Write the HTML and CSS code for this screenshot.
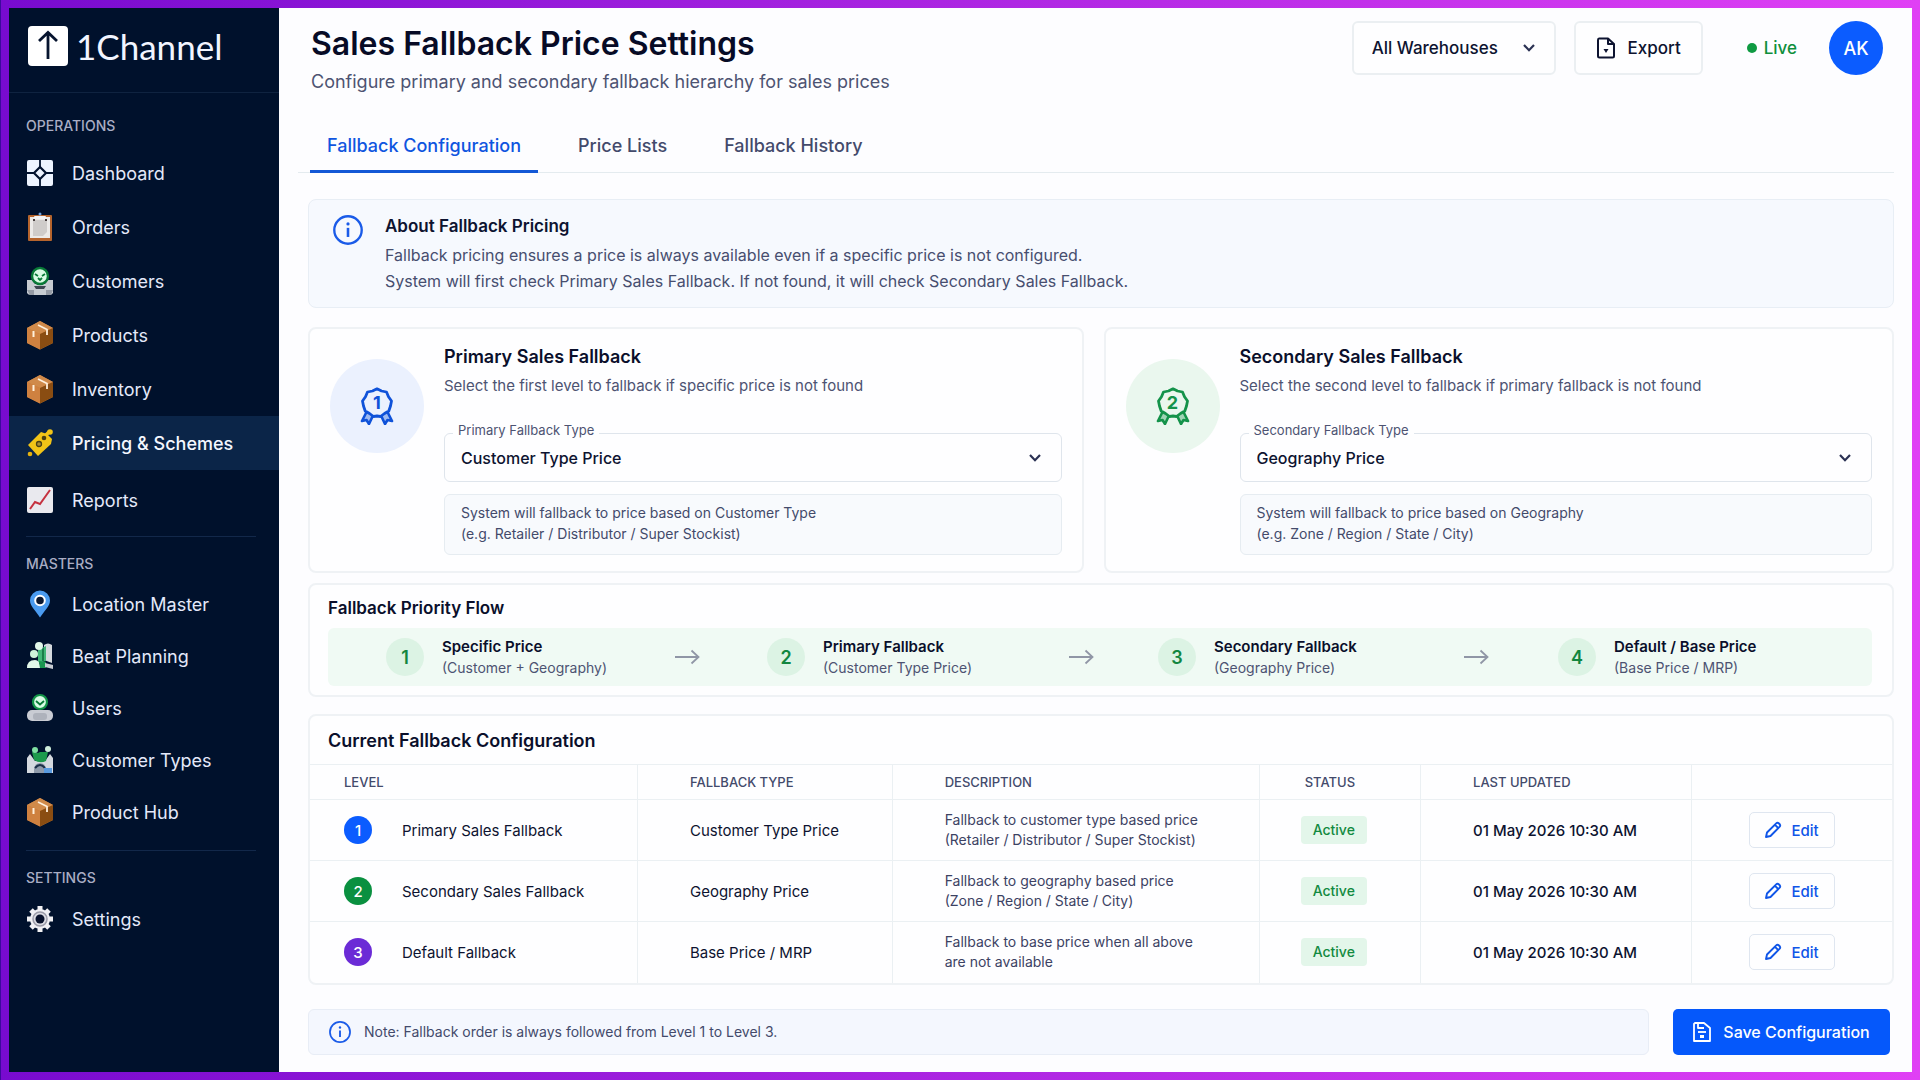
FILE: index.html
```
<!DOCTYPE html>
<html lang="en">
<head>
    <meta charset="UTF-8">
    <meta name="viewport" content="width=device-width, initial-scale=1.0">
    <title>Sales Fallback Price Settings | 1Channel</title>
    <link rel="stylesheet" href="styles.css">
</head>
<body>

    <!-- Shared icons -->
    <svg class="sprite" aria-hidden="true">
        <symbol id="icon-box" viewBox="0 0 26 30">
            <path d="M13 1 L26 8 V23 L13 29.500 L0 23 V8 Z" fill="#c47a3a"/>
            <path d="M13 1 L26 8 L13 14 L0 8 Z" fill="#d08a4a"/>
            <path d="M13 14 L26 8 V23 L13 29.500 Z" fill="#8a4d12"/>
            <path d="M0 8 L13 14 V29.500 L0 23 Z" fill="#cf8140"/>
            <path d="M11 5 L20 9.500 V15" fill="none" stroke="#fff0dc" stroke-width="1.800"/>
            <path d="M6.500 11 V17" fill="none" stroke="#fff0dc" stroke-width="2"/>
        </symbol>
        <symbol id="icon-info" viewBox="0 0 28 28">
            <circle cx="14" cy="14" r="12.800" fill="none" stroke="currentColor" stroke-width="2.200"/>
            <circle cx="14" cy="8.300" r="1.500" fill="currentColor"/>
            <path d="M14 12 V20.500" stroke="currentColor" stroke-width="2.400"/>
        </symbol>
        <symbol id="icon-chevron" viewBox="0 0 14 10">
            <path d="M2 2 L7 7.200 L12 2" fill="none" stroke="currentColor" stroke-width="2.200"/>
        </symbol>
        <symbol id="icon-arrow" viewBox="0 0 26 16">
            <path d="M1 8 H24 M17.500 1.500 L24.500 8 L17.500 14.500" fill="none" stroke="currentColor" stroke-width="1.800"/>
        </symbol>
        <symbol id="icon-medal" viewBox="0 0 34 38">
            <path d="M6.500 25 L2 34 L6.500 33 L9 37 L13 28.500 M27.500 25 L32 34 L27.500 33 L25 37 L21 28.500" fill="currentColor" fill-opacity="0.350" stroke="currentColor" stroke-width="2.600" stroke-linejoin="round"/>
            <path d="M17 1.800 L21.500 4 L26.500 5 L28.500 9.800 L31.500 14 L30.500 19 L28.800 24 L24.500 26.500 L20.500 29.500 L17 29 L13.500 29.500 L9.500 26.500 L5.200 24 L3.500 19 L2.500 14 L5.500 9.800 L7.500 5 L12.500 4 Z" fill="none" stroke="currentColor" stroke-width="2.800" stroke-linejoin="round"/>
        </symbol>
        <symbol id="icon-pencil" viewBox="0 0 18 18">
            <path d="M2 16 L3 11.500 L12.200 2.300 Q13.500 1 15 2.500 Q17 4.300 15.700 5.700 L6.500 15 Z M11 3.800 L14.200 7" fill="none" stroke="currentColor" stroke-width="1.900" stroke-linejoin="round"/>
        </symbol>
    </svg>

    <aside class="sidebar">
        <a href="#" class="logo">
            <svg width="40" height="40" viewBox="0 0 40 40" aria-hidden="true">
                <rect width="40" height="40" rx="4" fill="#ffffff"/>
                <path d="M20 33 V7 M11 15 L20 6.500 L29 15" fill="none" stroke="#06142f" stroke-width="2.800"/>
            </svg>
            <span>1Channel</span>
        </a>

        <nav class="side-nav">
            <h2>OPERATIONS</h2>
            <a href="#">
                <svg viewBox="0 0 26 30" aria-hidden="true">
                    <rect x="0" y="2" width="26" height="26" rx="2" fill="#eef4ff"/>
                    <path d="M13 2 V28 M0 15 H26" stroke="#03132f" stroke-width="1.800"/>
                    <path d="M13 9 L19 15 L13 21 L7 15 Z" fill="#eef4ff" stroke="#03132f" stroke-width="2.200"/>
                </svg>
                Dashboard
            </a>
            <a href="#">
                <svg viewBox="0 0 26 30" aria-hidden="true">
                    <rect x="1" y="3" width="24" height="26" rx="1" fill="#b5642d"/>
                    <rect x="3" y="5" width="20" height="21" fill="#eceae8"/>
                    <path d="M6 8 H20 V20 L16 24 H6 Z" fill="#cfccca"/>
                    <rect x="7" y="4" width="12" height="3" rx="1" fill="#f4f4f6"/>
                    <circle cx="13" cy="2" r="1.500" fill="#6fa0dc"/>
                    <path d="M6 8 H8 M18 8 H20" stroke="#443c3c" stroke-width="2"/>
                </svg>
                Orders
            </a>
            <a href="#">
                <svg viewBox="0 0 26 30" aria-hidden="true">
                    <path d="M0 14 L5 14 L8 18 H18 L21 14 H26 V27 Q25 29 22 29 H4 Q1 29 0 27 Z" fill="#c7ccd2"/>
                    <path d="M7 20 H19 L17 23 H9 Z" fill="#3d4652"/>
                    <path d="M0 24 H7 V29 H3 Z M19 24 H26 L24 29 H19 Z" fill="#959ba5"/>
                    <circle cx="13" cy="10" r="8" fill="#d9fbe4" stroke="#087a37" stroke-width="2.400"/>
                    <path d="M8 8 L11 10 M18 8 L15 10 M11 12 L13 14 L15 12" fill="none" stroke="#087a37" stroke-width="1.800"/>
                </svg>
                Customers
            </a>
            <a href="#"><svg aria-hidden="true"><use href="#icon-box"/></svg>Products</a>
            <a href="#"><svg aria-hidden="true"><use href="#icon-box"/></svg>Inventory</a>
            <a href="#" class="active" aria-current="page">
                <svg viewBox="0 0 26 30" aria-hidden="true">
                    <path d="M1 17 L14 4 L20 6 L25 11 L24 16 L11 28 Z" fill="#f2c417"/>
                    <path d="M18 8 L23 3" stroke="#f2c417" stroke-width="3.500"/>
                    <circle cx="23" cy="4" r="2.800" fill="#f2c417"/>
                    <circle cx="3" cy="26" r="2.300" fill="#e6b20e"/>
                    <circle cx="17" cy="10" r="2.300" fill="#4b4113"/>
                    <circle cx="12" cy="16" r="2.500" fill="#a98d35" stroke="#4b4113" stroke-width="1.300"/>
                </svg>
                Pricing &amp; Schemes
            </a>
            <a href="#">
                <svg viewBox="0 0 26 30" aria-hidden="true">
                    <rect x="0" y="2" width="26" height="26" rx="2" fill="#e9e9ee"/>
                    <path d="M3 24 L8 17 L13 19 L23 5" fill="none" stroke="#c5313f" stroke-width="2"/>
                </svg>
                Reports
            </a>
        </nav>

        <nav class="side-nav masters">
            <h2>MASTERS</h2>
            <a href="#">
                <svg viewBox="0 0 26 30" aria-hidden="true">
                    <path d="M13 28.500 C9 22 3 17.500 3 11.500 A10 10 0 0 1 23 11.500 C23 17.500 17 22 13 28.500 Z" fill="#4a9bf0"/>
                    <circle cx="13" cy="11.500" r="4.800" fill="#0b1830" stroke="#ffffff" stroke-width="2"/>
                </svg>
                Location Master
            </a>
            <a href="#">
                <svg viewBox="0 0 26 30" aria-hidden="true">
                    <path d="M17 4 Q21 1 25 4 V22 L17 19 Z" fill="#d5dade"/>
                    <path d="M11 9 L19 5 V20 L11 22 Z" fill="#42b678"/>
                    <path d="M16 7 V20" stroke="#0e6b3a" stroke-width="1.500"/>
                    <circle cx="12" cy="5" r="4" fill="#e2f8e9"/>
                    <circle cx="7" cy="13" r="4" fill="#cdf3da"/>
                    <path d="M0 27 Q0 19 8 19 Q13 19 13 27 Z" fill="#e2f8e9"/>
                    <path d="M12 20 L19 21 V27 H13 Z" fill="#1a9650"/>
                    <path d="M18 22 L26 24 V28 L18 26 Z" fill="#c7ccd2"/>
                </svg>
                Beat Planning
            </a>
            <a href="#">
                <svg viewBox="0 0 26 30" aria-hidden="true">
                    <rect x="0" y="17" width="26" height="11" rx="5" fill="#c9ccd3"/>
                    <rect x="6" y="20" width="14" height="7" rx="3" fill="#aeb2bb"/>
                    <circle cx="13" cy="9" r="7" fill="#d9fbe4" stroke="#129447" stroke-width="2.200"/>
                    <path d="M9 8 L13 11.500 L17 8" fill="none" stroke="#087a37" stroke-width="1.800"/>
                </svg>
                Users
            </a>
            <a href="#">
                <svg viewBox="0 0 26 30" aria-hidden="true">
                    <path d="M0 13 L3 9 L8 16 H18 L23 9 L26 13 V28 H0 Z" fill="#d4d9df"/>
                    <path d="M5 7 L11 8 L13 7 L21 7 L19 16 Q13 19 7 15 Z" fill="#1c9a4c"/>
                    <circle cx="8" cy="5" r="3" fill="#7fe0a2"/>
                    <circle cx="21" cy="4" r="3" fill="#cfeedb"/>
                    <path d="M7 24 Q8 18 13 18 Q18 18 19 24 V28 H7 Z" fill="#8f9bab"/>
                    <path d="M8 23 Q13 17 18 23" fill="none" stroke="#1b2f48" stroke-width="2"/>
                    <rect x="17" y="23" width="8" height="5" fill="#5a9be0"/>
                </svg>
                Customer Types
            </a>
            <a href="#"><svg aria-hidden="true"><use href="#icon-box"/></svg>Product Hub</a>
        </nav>

        <nav class="side-nav settings">
            <h2>SETTINGS</h2>
            <a href="#">
                <svg viewBox="0 0 26 30" aria-hidden="true">
                    <g stroke="#f1f1f4" stroke-width="5">
                        <path d="M13 2 V28 M0 15 H26 M4 6 L22 24 M22 6 L4 24"/>
                    </g>
                    <circle cx="13" cy="15" r="10" fill="#f1f1f4"/>
                    <circle cx="13" cy="15" r="7" fill="#dcdce2" stroke="#9c9ca8" stroke-width="1.500"/>
                    <circle cx="13" cy="15" r="4.500" fill="#07112a"/>
                </svg>
                Settings
            </a>
        </nav>
    </aside>

    <main class="main">
        <header class="page-header">
            <div>
                <h1>Sales Fallback Price Settings</h1>
                <p>Configure primary and secondary fallback hierarchy for sales prices</p>
            </div>
            <div class="header-actions">
                <div class="select-wrap warehouse">
                    <select aria-label="Warehouse">
                        <option>All Warehouses</option>
                    </select>
                    <svg aria-hidden="true"><use href="#icon-chevron"/></svg>
                </div>
                <button type="button" class="export">
                    <svg width="20" height="22" viewBox="0 0 20 22" aria-hidden="true">
                        <path d="M3 1.500 H12 L18 7 V19 Q18 20.500 16.500 20.500 H3.500 Q2 20.500 2 19 V3 Q2 1.500 3 1.500 Z M12 1.500 V7 H18" fill="none" stroke="currentColor" stroke-width="2" stroke-linejoin="round"/>
                        <path d="M7.500 12 H12.500 L10 16 Z" fill="currentColor"/>
                    </svg>
                    Export
                </button>
                <span class="live">Live</span>
                <button type="button" class="avatar">AK</button>
            </div>
        </header>

        <nav class="tabs">
            <a href="#" class="active" aria-current="page">Fallback Configuration</a>
            <a href="#">Price Lists</a>
            <a href="#">Fallback History</a>
        </nav>

        <section class="about">
            <svg aria-hidden="true"><use href="#icon-info"/></svg>
            <div>
                <h2>About Fallback Pricing</h2>
                <p>Fallback pricing ensures a price is always available even if a specific price is not configured.<br>
                System will first check Primary Sales Fallback. If not found, it will check Secondary Sales Fallback.</p>
            </div>
        </section>

        <div class="fallback-cards">
            <section class="card fallback-card">
                <div class="medal medal-blue">
                    <svg aria-hidden="true"><use href="#icon-medal"/></svg>
                    <span>1</span>
                </div>
                <div class="fallback-body">
                    <h2>Primary Sales Fallback</h2>
                    <p>Select the first level to fallback if specific price is not found</p>
                    <div class="field">
                        <label for="primaryType">Primary Fallback Type</label>
                        <div class="select-wrap">
                            <select id="primaryType">
                                <option>Customer Type Price</option>
                            </select>
                            <svg aria-hidden="true"><use href="#icon-chevron"/></svg>
                        </div>
                    </div>
                    <div class="hint">System will fallback to price based on Customer Type<br>(e.g. Retailer / Distributor / Super Stockist)</div>
                </div>
            </section>

            <section class="card fallback-card">
                <div class="medal medal-green">
                    <svg aria-hidden="true"><use href="#icon-medal"/></svg>
                    <span>2</span>
                </div>
                <div class="fallback-body">
                    <h2>Secondary Sales Fallback</h2>
                    <p>Select the second level to fallback if primary fallback is not found</p>
                    <div class="field">
                        <label for="secondaryType">Secondary Fallback Type</label>
                        <div class="select-wrap">
                            <select id="secondaryType">
                                <option>Geography Price</option>
                            </select>
                            <svg aria-hidden="true"><use href="#icon-chevron"/></svg>
                        </div>
                    </div>
                    <div class="hint">System will fallback to price based on Geography<br>(e.g. Zone / Region / State / City)</div>
                </div>
            </section>
        </div>

        <section class="card flow">
            <h2>Fallback Priority Flow</h2>
            <div class="flow-steps">
                <div class="step">
                    <span class="step-number">1</span>
                    <div><strong>Specific Price</strong><br>(Customer + Geography)</div>
                </div>
                <svg class="arrow" aria-hidden="true"><use href="#icon-arrow"/></svg>
                <div class="step">
                    <span class="step-number">2</span>
                    <div><strong>Primary Fallback</strong><br>(Customer Type Price)</div>
                </div>
                <svg class="arrow" aria-hidden="true"><use href="#icon-arrow"/></svg>
                <div class="step">
                    <span class="step-number">3</span>
                    <div><strong>Secondary Fallback</strong><br>(Geography Price)</div>
                </div>
                <svg class="arrow" aria-hidden="true"><use href="#icon-arrow"/></svg>
                <div class="step">
                    <span class="step-number">4</span>
                    <div><strong>Default / Base Price</strong><br>(Base Price / MRP)</div>
                </div>
            </div>
        </section>

        <section class="card config">
            <h2>Current Fallback Configuration</h2>
            <table>
                <colgroup>
                    <col class="col-level">
                    <col class="col-type">
                    <col class="col-description">
                    <col class="col-status">
                    <col class="col-updated">
                    <col>
                </colgroup>
                <thead>
                    <tr>
                        <th>LEVEL</th>
                        <th>FALLBACK TYPE</th>
                        <th>DESCRIPTION</th>
                        <th>STATUS</th>
                        <th>LAST UPDATED</th>
                        <th aria-label="Actions"></th>
                    </tr>
                </thead>
                <tbody>
                    <tr>
                        <td><div class="level"><span class="level-number blue">1</span>Primary Sales Fallback</div></td>
                        <td>Customer Type Price</td>
                        <td class="description">Fallback to customer type based price<br>(Retailer / Distributor / Super Stockist)</td>
                        <td><span class="badge">Active</span></td>
                        <td class="updated">01 May 2026 10:30 AM</td>
                        <td><button type="button" class="edit"><svg aria-hidden="true"><use href="#icon-pencil"/></svg>Edit</button></td>
                    </tr>
                    <tr>
                        <td><div class="level"><span class="level-number green">2</span>Secondary Sales Fallback</div></td>
                        <td>Geography Price</td>
                        <td class="description">Fallback to geography based price<br>(Zone / Region / State / City)</td>
                        <td><span class="badge">Active</span></td>
                        <td class="updated">01 May 2026 10:30 AM</td>
                        <td><button type="button" class="edit"><svg aria-hidden="true"><use href="#icon-pencil"/></svg>Edit</button></td>
                    </tr>
                    <tr>
                        <td><div class="level"><span class="level-number purple">3</span>Default Fallback</div></td>
                        <td>Base Price / MRP</td>
                        <td class="description">Fallback to base price when all above<br>are not available</td>
                        <td><span class="badge">Active</span></td>
                        <td class="updated">01 May 2026 10:30 AM</td>
                        <td><button type="button" class="edit"><svg aria-hidden="true"><use href="#icon-pencil"/></svg>Edit</button></td>
                    </tr>
                </tbody>
            </table>
        </section>

        <footer class="page-footer">
            <p class="note">
                <svg aria-hidden="true"><use href="#icon-info"/></svg>
                Note: Fallback order is always followed from Level 1 to Level 3.
            </p>
            <button type="button" class="save">
                <svg width="18" height="20" viewBox="0 0 18 20" aria-hidden="true">
                    <path d="M2 1 H11 L17 6 V19 H1 V2 Z M5 1 V6 H11" fill="none" stroke="currentColor" stroke-width="1.800" stroke-linejoin="round"/>
                    <path d="M5 10 H13" stroke="currentColor" stroke-width="1.800"/>
                    <rect x="7" y="13" width="4" height="3" fill="currentColor"/>
                </svg>
                Save Configuration
            </button>
        </footer>
    </main>

</body>
</html>
```
FILE: styles.css
```
* {
    box-sizing: border-box;
}

body {
    font-family: 'Inter', sans-serif;
    margin: 0;
    padding: 8px;
    min-height: 100vh;
    display: flex;
    color: #0d1330;
    background: linear-gradient(90deg, #780bcf, #e040f5);
    border-left: 1px solid #3c0b9c;
}

h1,
h2,
p {
    margin: 0;
}

a {
    text-decoration: none;
}

button,
select {
    font-family: inherit;
    cursor: pointer;
}

.sprite {
    position: absolute;
    width: 0;
    height: 0;
}

/* Sidebar */
.sidebar {
    width: 270px;
    flex-shrink: 0;
    background-color: #00112c;
}

.logo {
    display: flex;
    align-items: center;
    gap: 8px;
    height: 85px;
    padding: 0 19px 8px;
    color: #f2f5ff;
    font-family: 'Lato', sans-serif;
    font-size: 35px;
    border-bottom: 1px solid #0f2340;
}

.side-nav h2 {
    display: flex;
    align-items: center;
    height: 53px;
    padding: 12px 17px 0;
    font-size: 14px;
    font-weight: 500;
    color: #a9adc4;
}

.side-nav a {
    display: flex;
    align-items: center;
    gap: 19px;
    height: 54px;
    padding: 0 17px 0 18px;
    font-size: 18px;
    color: #e4e9fa;
}

.side-nav a svg {
    width: 26px;
    height: 30px;
    flex-shrink: 0;
}

.side-nav a.active {
    margin-bottom: 3px;
    font-weight: 500;
    color: #f4f7ff;
    background-color: #0b2548;
}

.side-nav a:hover {
    background-color: #0b2548;
}

.side-nav.masters {
    margin-top: 9px;
}

.side-nav.settings {
    margin-top: 12px;
}

.side-nav.masters::before,
.side-nav.settings::before {
    content: '';
    display: block;
    margin: 0 23px 0 17px;
    border-top: 1px solid #12284a;
}

.side-nav.masters h2,
.side-nav.settings h2 {
    height: 41px;
    padding-top: 11px;
}

.side-nav.masters a {
    height: 52px;
}

/* Page header */
.main {
    flex: 1;
    min-width: 0;
    padding: 13px 18px 16px 29px;
    background-color: #fdfdff;
}

.page-header {
    display: flex;
    justify-content: space-between;
    padding: 0 11px 0 3px;
}

.page-header h1 {
    font-size: 32px;
    line-height: 46px;
    font-weight: 600;
    color: #070b26;
}

.page-header p {
    font-size: 18px;
    line-height: 30px;
    color: #4d5372;
}

.header-actions {
    display: flex;
    align-items: center;
    gap: 18px;
    height: 54px;
    font-size: 17px;
    font-weight: 500;
}

.select-wrap {
    display: grid;
    align-items: center;
}

.select-wrap select,
.select-wrap svg {
    grid-area: 1 / 1;
}

.select-wrap select {
    appearance: none;
    width: 100%;
    border: 1px solid #dfe5ec;
    border-radius: 6px;
    background-color: #fefeff;
    color: #0d1330;
    font-weight: 500;
}

.select-wrap svg {
    width: 14px;
    height: 10px;
    justify-self: end;
    margin-right: 20px;
    color: #2a3153;
    pointer-events: none;
}

.warehouse select {
    width: 204px;
    height: 54px;
    padding: 0 18px;
    font-size: 17px;
    border: 2px solid #ebeff2;
}

.export {
    display: flex;
    align-items: center;
    justify-content: center;
    gap: 12px;
    width: 129px;
    height: 54px;
    font-size: 17px;
    font-weight: 500;
    color: #0d1330;
    background-color: #fefeff;
    border: 2px solid #ebeff2;
    border-radius: 6px;
}

.live {
    display: flex;
    align-items: center;
    gap: 7px;
    margin: 0 14px 0 26px;
    color: #0f8f3c;
}

.live::before {
    content: '';
    width: 10px;
    height: 10px;
    border-radius: 50%;
    background-color: #0f9a42;
}

.avatar {
    width: 54px;
    height: 54px;
    padding: 0;
    border: none;
    border-radius: 50%;
    font-size: 18px;
    font-weight: 500;
    color: #ffffff;
    background-color: #0b5cff;
}

/* Tabs */
.tabs {
    display: flex;
    gap: 23px;
    margin: 24px 0 26px -10px;
    padding-left: 12px;
    border-bottom: 1px solid #e4ebef;
}

.tabs a {
    padding: 13px 17px 12px;
    margin-bottom: -1px;
    font-size: 18px;
    line-height: 24px;
    font-weight: 500;
    color: #434a6b;
    border-bottom: 3px solid transparent;
}

.tabs a.active {
    color: #0f55e0;
    border-bottom-color: #1358d6;
}

/* About box */
.about {
    display: flex;
    gap: 22px;
    padding: 13px 24px;
    background-color: #f6f9fe;
    border: 1px solid #e8eef5;
    border-radius: 8px;
}

.about svg {
    width: 30px;
    height: 30px;
    margin-top: 2px;
    color: #1a5be8;
}

.about h2 {
    margin-bottom: 3px;
    font-size: 17px;
    line-height: 26px;
    font-weight: 600;
}

.about p {
    font-size: 16px;
    line-height: 26px;
    color: #474e6f;
}

/* Cards */
.card {
    background-color: #fefeff;
    border: 2px solid #eff2f5;
    border-radius: 8px;
}

.card h2 {
    font-size: 18px;
    line-height: 26px;
    font-weight: 600;
    color: #0a0f2b;
}

.fallback-cards {
    display: grid;
    grid-template-columns: 776fr 791fr;
    gap: 20px;
    margin-top: 19px;
}

.fallback-card {
    display: flex;
    gap: 20px;
    padding: 15px 20px 16px;
}

.medal {
    display: grid;
    place-items: center;
    flex-shrink: 0;
    width: 94px;
    height: 94px;
    margin-top: 15px;
    border-radius: 50%;
}

.medal svg,
.medal span {
    grid-area: 1 / 1;
}

.medal svg {
    width: 34px;
    height: 38px;
}

.medal span {
    padding-bottom: 6px;
    font-size: 18px;
    line-height: 20px;
    font-weight: 700;
}

.medal-blue {
    color: #0f52d9;
    background-color: #ebf1fe;
}

.medal-green {
    color: #14934a;
    background-color: #eaf7ee;
}

.fallback-body {
    flex: 1;
}

.fallback-body p {
    font-size: 15px;
    line-height: 32px;
    color: #4d5372;
}

.field {
    position: relative;
    margin-top: 31px;
}

/* Label sits over the border of the select */
.field label {
    position: absolute;
    top: -13px;
    left: 9px;
    padding: 0 5px;
    font-size: 13px;
    line-height: 20px;
    color: #4d5372;
    background-color: #fefeff;
}

.field select {
    height: 49px;
    padding: 0 16px;
    font-size: 16px;
}

.hint {
    margin-top: 12px;
    padding: 7px 16px 10px;
    font-size: 14px;
    line-height: 21px;
    color: #434a6b;
    background-color: #f8fafd;
    border: 1px solid #e6ecf1;
    border-radius: 6px;
}

/* Priority flow */
.flow {
    margin-top: 10px;
    padding: 10px 20px 9px 18px;
}

.flow h2 {
    font-size: 17px;
}

.flow-steps {
    display: grid;
    grid-template-columns: 288fr 93fr 301fr 90fr 305fr 95fr 314fr;
    align-items: center;
    margin-top: 7px;
    padding: 8px 0 8px 58px;
    background-color: #f0faf4;
    border-radius: 6px;
}

.step {
    display: flex;
    align-items: center;
    gap: 18px;
    font-size: 14px;
    line-height: 21px;
    white-space: nowrap;
    color: #4d5372;
}

.step strong {
    font-size: 15px;
    font-weight: 600;
    color: #0a0f2b;
}

.step-number {
    display: grid;
    place-items: center;
    width: 38px;
    height: 38px;
    border-radius: 50%;
    font-size: 18px;
    font-weight: 600;
    color: #12863f;
    background-color: #dcf3e4;
}

.arrow {
    width: 26px;
    height: 16px;
    color: #9096a6;
}

/* Configuration table */
.config {
    margin-top: 17px;
}

.config h2 {
    padding: 12px 18px 10px;
}

.config table {
    width: 100%;
    table-layout: fixed;
    border-collapse: collapse;
}

.col-level {
    width: 20.7%;
}

.col-type {
    width: 16.1%;
}

.col-description {
    width: 23.2%;
}

.col-status {
    width: 10.2%;
}

.col-updated {
    width: 17.1%;
}

.config th,
.config td {
    padding: 0 0 0 52px;
    text-align: left;
    border-top: 1px solid #ebf0f3;
    border-left: 1px solid #ebf0f3;
    white-space: nowrap;
}

.config th:first-child,
.config td:first-child {
    padding-left: 34px;
    border-left: none;
}

.config th {
    height: 35px;
    font-size: 13px;
    font-weight: 500;
    color: #434a6b;
}

.config th:nth-child(4) {
    padding-left: 45px;
}

.config td:nth-child(4) {
    padding-left: 41px;
}

.config td:last-child {
    padding-left: 57px;
}

.config td {
    height: 61px;
    font-size: 15px;
}

.config td.updated {
    font-weight: 500;
}

.config td.description {
    font-size: 14px;
    line-height: 20px;
    color: #3c4263;
}

.level {
    display: flex;
    align-items: center;
    gap: 30px;
}

.level-number {
    display: grid;
    place-items: center;
    width: 28px;
    height: 28px;
    border-radius: 50%;
    font-size: 15px;
    font-weight: 500;
    color: #ffffff;
}

.level-number.blue {
    background-color: #0b5cff;
}

.level-number.green {
    background-color: #0a9040;
}

.level-number.purple {
    background-color: #6b2bd6;
}

.badge {
    display: inline-block;
    padding: 0 12px;
    font-size: 14px;
    line-height: 28px;
    font-weight: 500;
    color: #128a40;
    background-color: #e3f6ea;
    border-radius: 4px;
}

.edit {
    display: flex;
    align-items: center;
    justify-content: center;
    gap: 9px;
    width: 86px;
    height: 36px;
    font-size: 15px;
    font-weight: 500;
    color: #0f55e8;
    background-color: #fefeff;
    border: 1px solid #dfe6f0;
    border-radius: 5px;
}

.edit svg {
    width: 18px;
    height: 18px;
}

/* Footer */
.page-footer {
    display: flex;
    gap: 24px;
    margin-top: 24px;
    padding-right: 4px;
}

.note {
    display: flex;
    align-items: center;
    flex: 1;
    gap: 13px;
    padding: 0 20px;
    font-size: 14px;
    color: #434a6b;
    background-color: #f4f7fe;
    border: 1px solid #e8edf6;
    border-radius: 6px;
}

.note svg {
    width: 22px;
    height: 22px;
    color: #1a5be8;
}

.save {
    display: flex;
    align-items: center;
    justify-content: center;
    gap: 12px;
    width: 217px;
    height: 46px;
    padding: 0;
    font-size: 16px;
    font-weight: 500;
    color: #ffffff;
    background-color: #0558fb;
    border: none;
    border-radius: 5px;
}
```
